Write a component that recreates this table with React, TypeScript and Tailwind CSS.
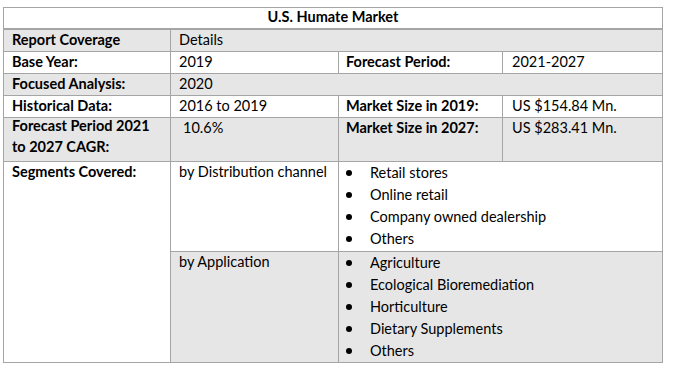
const line = "border-[#a5a5a5]";

function Bullets({ items }: { items: string[] }) {
  return (
    <ul className="-mt-[4px] pt-[4px]">
      {items.map((item) => (
        <li key={item} className="flex items-center leading-[22px]">
          <span className="ml-[7px] mr-[18px] h-[6px] w-[6px] rounded-full bg-black" />
          <span>{item}</span>
        </li>
      ))}
    </ul>
  );
}

export default function App() {
  const cell = `border-r border-b ${line} pt-[2px] pl-[8px] pr-[6px] leading-[16px]`;
  const gray = "bg-[#e7e6e6]";

  return (
    <div
      className="min-h-[372px] w-[675px] bg-white pl-[3px] pt-[7px] text-[14.5px] text-black"
      style={{ fontFamily: "Lato, 'Open Sans', sans-serif" }}
    >
      <div
        className={`grid w-[660px] grid-cols-[167px_168px_164px_160px] grid-rows-[22px_22px_22px_22px_22px_44px_90px_111px] border-t border-l ${line}`}
      >
        <div className={`col-span-4 border-r border-b-2 ${line} text-center font-bold leading-[16px] pt-[1px]`}>
          U.S. Humate Market
        </div>

        <div className={`${cell} ${gray} font-bold`}>Report Coverage</div>
        <div className={`${cell} ${gray} col-span-3`}>Details</div>

        <div className={`${cell} font-bold`}>Base Year:</div>
        <div className={`${cell}`}>2019</div>
        <div className={`${cell} font-bold !pl-[7px]`}>Forecast Period:</div>
        <div className={`${cell} !pl-[9px]`}>2021-2027</div>

        <div className={`${cell} ${gray} font-bold`}>Focused Analysis:</div>
        <div className={`${cell} ${gray} col-span-3`}>2020</div>

        <div className={`${cell} font-bold`}>Historical Data:</div>
        <div className={`${cell}`}>2016 to 2019</div>
        <div className={`${cell} font-bold !pl-[7px]`}>Market Size in 2019:</div>
        <div className={`${cell} !pl-[9px]`}>US $154.84 Mn.</div>

        <div className={`border-r border-b ${line} ${gray} pl-[8px] font-bold leading-[21px]`}>
          <div className="-mt-[3px]">
            Forecast Period 2021
            <br />
            to 2027 CAGR:
          </div>
        </div>
        <div className={`${cell} ${gray} !pl-[12px]`}>10.6%</div>
        <div className={`${cell} ${gray} font-bold !pl-[7px]`}>Market Size in 2027:</div>
        <div className={`${cell} ${gray} !pl-[9px]`}>US $283.41 Mn.</div>

        <div className={`${cell} row-span-2 font-bold`}>Segments Covered:</div>
        <div className={`${cell}`}>by Distribution channel</div>
        <div className={`border-r border-b ${line} col-span-2`}>
          <Bullets items={["Retail stores", "Online retail", "Company owned dealership", "Others"]} />
        </div>

        <div className={`${cell} ${gray}`}>by Application</div>
        <div className={`border-r border-b ${line} ${gray} col-span-2`}>
          <Bullets
            items={["Agriculture", "Ecological Bioremediation", "Horticulture", "Dietary Supplements", "Others"]}
          />
        </div>
      </div>
    </div>
  );
}
